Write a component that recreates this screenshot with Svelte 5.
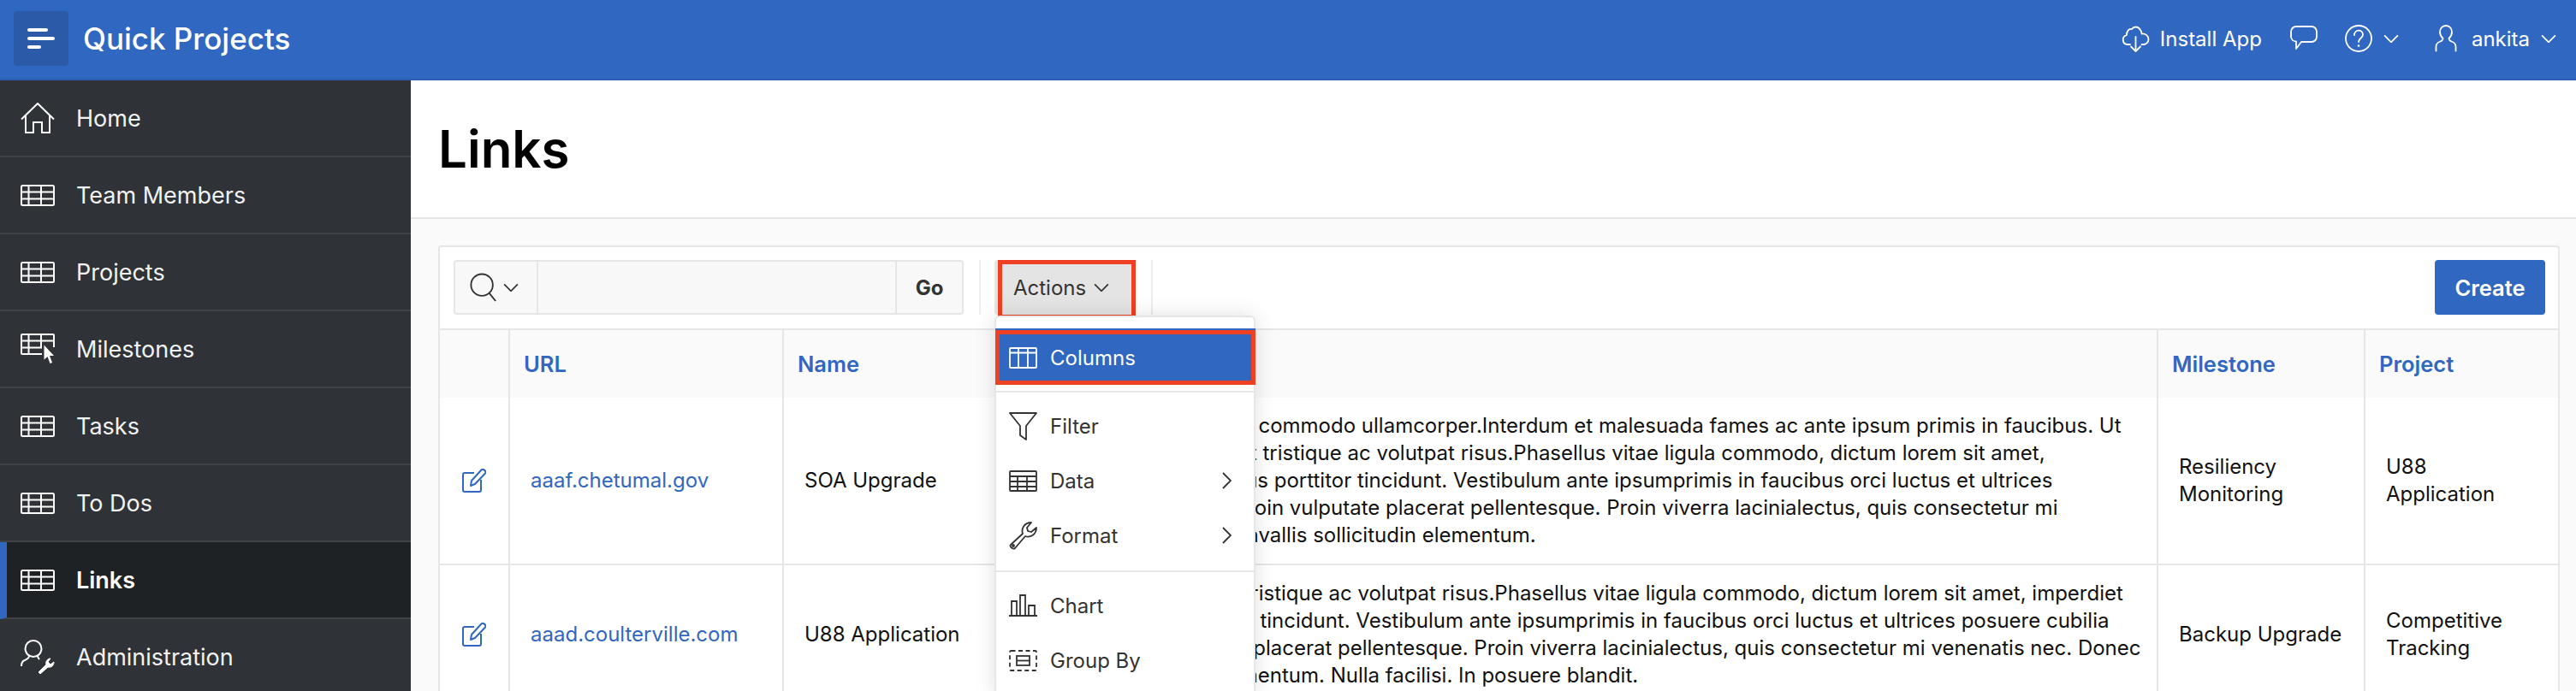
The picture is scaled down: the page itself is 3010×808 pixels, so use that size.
<script>
	const nav = [
		{ label: 'Home', icon: 'home' },
		{ label: 'Team Members', icon: 'table' },
		{ label: 'Projects', icon: 'table' },
		{ label: 'Milestones', icon: 'cursor' },
		{ label: 'Tasks', icon: 'table' },
		{ label: 'To Dos', icon: 'table' },
		{ label: 'Links', icon: 'table', active: true },
		{ label: 'Administration', icon: 'admin' }
	];
	const rows = [
		{
			url: 'aaaf.chetumal.gov',
			name: 'SOA Upgrade',
			lines: [
				'Aliquam ut ante sed nisl commodo ullamcorper.Interdum et malesuada fames ac ante ipsum primis in faucibus. Ut',
				'Nulla, nec lorem amet at tristique ac volutpat risus.Phasellus vitae ligula commodo, dictum lorem sit amet,',
				'Augue sed nisl a vivamus porttitor tincidunt. Vestibulum ante ipsumprimis in faucibus orci luctus et ultrices',
				'Posuere cubilias sed. Proin vulputate placerat pellentesque. Proin viverra lacinialectus, quis consectetur mi',
				'Venenatis sed vel et convallis sollicitudin elementum.'
			],
			milestone: ['Resiliency', 'Monitoring'],
			project: ['U88', 'Application']
		},
		{
			url: 'aaad.coulterville.com',
			name: 'U88 Application',
			lines: [
				'Sed eget nunc nulla at tristique ac volutpat risus.Phasellus vitae ligula commodo, dictum lorem sit amet, imperdiet',
				'Augue vivamus porttitor tincidunt. Vestibulum ante ipsumprimis in faucibus orci luctus et ultrices posuere cubilia',
				'Curae sed, at vulputate placerat pellentesque. Proin viverra lacinialectus, quis consectetur mi venenatis nec. Donec',
				'Sed sollicitudine et elementum. Nulla facilisi. In posuere blandit.'
			],
			milestone: ['Backup Upgrade'],
			project: ['Competitive', 'Tracking']
		}
	];
</script>

{#snippet tableIcon()}
	<svg class="nav-icon" viewBox="0 0 40 25" width="40" height="25" fill="none" stroke="#fff" stroke-width="2">
		<rect x="1" y="1" width="38" height="23" rx="1.5" />
		<path d="M1 8.5h38M1 16.5h38M9.500 1v23M24 1v23" />
	</svg>
{/snippet}

{#snippet chevron(w)}
	<svg width={w} height={w * 0.6} viewBox="0 0 18 11" fill="none" stroke="currentColor" stroke-width="1.800"><path d="M1 1.500l8 8 8-8" /></svg>
{/snippet}

<div class="app">
	<header class="top">
		<button class="burger" aria-label="Menu">
			<svg width="32" height="24" viewBox="0 0 32 24" fill="#fff">
				<rect y="0" width="24" height="4" rx="2" />
				<rect y="10" width="32" height="4" rx="2" />
				<rect y="20" width="16" height="4" rx="2" />
			</svg>
		</button>
		<div class="brand">Quick Projects</div>
		<div class="top-right">
			<svg class="cloud" width="33" height="32" viewBox="0 0 33 32" fill="none" stroke="#fff" stroke-width="1.800" stroke-linecap="round" stroke-linejoin="round">
				<path d="M10 23H7a5.500 5.500 0 0 1-1.200-10.800C6 7 9 4 12 5c2-3 7-4 10 1 1 1.500 1.500 3 1.500 4.500 4-.5 8 2 8 6.500 0 3.500-3 6-6 6h-2" />
				<path d="M16.500 14v17M11 25.500l5.500 5.500 5.500-5.500" />
			</svg>
			<span class="install">Install App</span>
			<svg class="chat" width="32" height="32" viewBox="0 0 32 32" fill="none" stroke="#fff" stroke-width="1.800" stroke-linejoin="round">
				<path d="M7 2h18a6 6 0 0 1 6 6v6a6 6 0 0 1-6 6H13l-6 8v-8.500A6 6 0 0 1 1 14V8a6 6 0 0 1 6-6z" />
			</svg>
			<svg class="help" width="32" height="36" viewBox="0 0 32 36" fill="none" stroke="#fff" stroke-width="1.800">
				<circle cx="16" cy="18" r="15" />
				<path d="M11 14c0-7 10-7 10-.5 0 4-5 4-5 8.500" stroke-linecap="round" />
				<circle cx="16" cy="26.500" r="1.300" fill="#fff" stroke="none" />
			</svg>
			<span class="chev">{@render chevron(18)}</span>
			<svg class="user" width="26" height="32" viewBox="0 0 26 32" fill="none" stroke="#fff" stroke-width="1.800" stroke-linecap="round">
				<path d="M13 1c4.500 0 7 3.500 7 7.500 0 3.500-2 6-3.500 7.500 0 2 1 2.500 3 3.500 3 1 5 3 5 6v5M13 1c-4.500 0-7 3.500-7 7.500 0 3.500 2 6 3.500 7.500 0 2-1 2.500-3 3.500-3 1-5 3-5 6v5" />
			</svg>
			<span class="username">ankita</span>
			<span class="chev">{@render chevron(18)}</span>
		</div>
	</header>

	<div class="main">
		<nav class="side">
			{#each nav as item}
				<a class="item" class:active={item.active} href="#top">
					{#if item.icon === 'home'}
						<svg class="nav-icon" width="40" height="36" viewBox="0 0 40 36" fill="none" stroke="#fff" stroke-width="2">
							<path d="M1 19.500L20 1l19 18.500M6 15v20h9V23h10v12h9V15" />
						</svg>
					{:else if item.icon === 'table'}
						{@render tableIcon()}
					{:else if item.icon === 'cursor'}
						<svg class="nav-icon" width="40" height="36" viewBox="0 0 40 36" fill="none" stroke="#fff" stroke-width="2">
							<path d="M25 24H2a1 1 0 0 1-1-1V2a1 1 0 0 1 1-1h36a1 1 0 0 1 1 1v14M1 8.500h38M1 16.500h24M9.500 1v23M24 1v16" />
							<path d="M27.500 13.500v17l4-3.500 3 8 2.500-1-3-8h5z" fill="#fff" stroke="none" />
						</svg>
					{:else}
						<svg class="nav-icon" width="40" height="40" viewBox="0 0 40 40" fill="none" stroke="#fff" stroke-width="2">
							<circle cx="15" cy="10.500" r="9.500" />
							<path d="M10 19c0 3-3 4-5 5-3 1-4 3-4 7M20 19c0 2 1 3 2 4" />
							<path d="M21 38l9-9c-1-3 1-7 5-7l-3 4 3 3 4-3c0 4-3 7-7 6l-9 8z" fill="#fff" stroke="#fff" stroke-width="1" />
						</svg>
					{/if}
					<span>{item.label}</span>
				</a>
			{/each}
		</nav>

		<main class="content">
			<div class="page-head"><h1>Links</h1></div>
			<section class="region">
				<div class="toolbar">
					<div class="search">
						<div class="search-col">
							<svg width="32" height="34" viewBox="0 0 34 36" fill="none" stroke="#333" stroke-width="2">
								<circle cx="15" cy="15" r="13.500" />
								<path d="M24 25l8 10" />
							</svg>
							<span class="chev">{@render chevron(18)}</span>
						</div>
						<div class="search-input"></div>
						<div class="go">Go</div>
					</div>
					<div class="sep"></div>
					<div class="actions">
						<span>Actions</span>
						<span class="chev">{@render chevron(18)}</span>
						<div class="red-box"></div>
					</div>
					<div class="sep"></div>
					<button class="create">Create</button>

					<div class="menu">
						<div class="menu-item current">
							<svg width="33" height="25" viewBox="0 0 33 25" fill="none" stroke="#fff" stroke-width="1.800">
								<rect x="1" y="1" width="31" height="23" rx="1" />
								<path d="M1 6.500h31M11 1v23M22 1v23" />
							</svg>
							<span>Columns</span>
						</div>
						<div class="menu-list">
							<div class="menu-item">
								<svg width="33" height="33" viewBox="0 0 33 33" fill="none" stroke="#333" stroke-width="1.800" stroke-linejoin="round">
									<path d="M1 1h31L20 16v16l-7-5V16z" />
								</svg>
								<span>Filter</span>
							</div>
							<div class="menu-item">
								<svg width="33" height="25" viewBox="0 0 33 25" fill="none" stroke="#333" stroke-width="1.800">
									<rect x="1" y="1" width="31" height="23" rx="1" />
									<path d="M1 7h31M1 13h31M1 19h31M10 7v17M21 7v17" />
								</svg>
								<span>Data</span>
								<svg class="arrow" width="11" height="20" viewBox="0 0 11 20" fill="none" stroke="#333" stroke-width="1.800"><path d="M1 1l9 9-9 9" /></svg>
							</div>
							<div class="menu-item">
								<svg width="33" height="33" viewBox="0 0 33 33" fill="none" stroke="#333" stroke-width="1.800" stroke-linejoin="round">
									<path d="M2 27L16 14c-2-6 2-13 10-13l-5 6 1 4 4 1 6-5c0 8-7 12-13 10L7 31c-2 2-7-2-5-4z" />
									<circle cx="5" cy="28" r="1" />
								</svg>
								<span>Format</span>
								<svg class="arrow" width="11" height="20" viewBox="0 0 11 20" fill="none" stroke="#333" stroke-width="1.800"><path d="M1 1l9 9-9 9" /></svg>
							</div>
						</div>
						<div class="menu-list second">
							<div class="menu-item">
								<svg width="33" height="26" viewBox="0 0 33 26" fill="none" stroke="#333" stroke-width="1.800">
									<path d="M0 25h33M3 25V8h6v17M13 25V1h6v24M23 25V13h7v12" />
								</svg>
								<span>Chart</span>
							</div>
							<div class="menu-item">
								<svg width="33" height="25" viewBox="0 0 33 25" fill="none" stroke="#333" stroke-width="1.800">
									<rect x="1" y="1" width="31" height="23" rx="1.500" stroke-dasharray="5 3.500" />
									<rect x="9" y="7" width="15" height="11" />
									<path d="M9 12.500h15" />
								</svg>
								<span>Group By</span>
							</div>
						</div>
					</div>
				</div>

				<table>
					<colgroup>
						<col class="c-edit" /><col class="c-url" /><col class="c-name" /><col /><col class="c-mile" /><col class="c-proj" />
					</colgroup>
					<thead>
						<tr>
							<th></th>
							<th>URL</th>
							<th>Name</th>
							<th></th>
							<th>Milestone</th>
							<th>Project</th>
						</tr>
					</thead>
					<tbody>
						{#each rows as row}
							<tr>
								<td class="edit">
									<svg width="28" height="28" viewBox="0 0 28 28" fill="none" stroke="#3067c0" stroke-width="2" stroke-linejoin="round">
										<path d="M14 5H3a2 2 0 0 0-2 2v18a2 2 0 0 0 2 2h17a2 2 0 0 0 2-2V13" />
										<path d="M10 20l1-6L22 2c1-1.500 3-1.500 4.500 0s1 3 0 4L15 18z" />
									</svg>
								</td>
								<td class="url"><a href="#top">{row.url}</a></td>
								<td class="name">{row.name}</td>
								<td class="desc">
									{#each row.lines as line}<div>{line}</div>{/each}
								</td>
								<td>{#each row.milestone as l}<div>{l}</div>{/each}</td>
								<td>{#each row.project as l}<div>{l}</div>{/each}</td>
							</tr>
						{/each}
					</tbody>
				</table>
			</section>
		</main>
	</div>
</div>

<style>
	:global(body) {
		margin: 0;
	}
	.app {
		width: 3010px;
		height: 808px;
		overflow: hidden;
		display: flex;
		flex-direction: column;
		font-family: Inter, "Liberation Sans", sans-serif;
		font-size: 24px;
		color: #111;
	}
	.top {
		flex: 0 0 94px;
		box-sizing: border-box;
		display: flex;
		align-items: center;
		background: #3067c0;
		border-bottom: 2px solid #2c5fb2;
		color: #fff;
		padding: 0 23px 2px 16px;
	}
	.burger {
		width: 64px;
		height: 64px;
		padding: 0;
		border: 0;
		border-radius: 4px;
		background: #2a5aa8;
		display: flex;
		align-items: center;
		justify-content: center;
	}
	.brand {
		margin-left: 17px;
		font-size: 35px;
		font-weight: 500;
	}
	.top-right {
		margin-left: auto;
		display: flex;
		align-items: center;
		font-size: 24px;
	}
	.install {
		margin-left: 12px;
	}
	.chat {
		margin-left: 33px;
	}
	.help {
		margin-left: 32px;
	}
	.chev {
		display: inline-flex;
		margin-left: 13px;
	}
	.user {
		margin-left: 42px;
	}
	.username {
		margin-left: 17px;
	}
	.main {
		flex: 1;
		display: flex;
		min-height: 0;
	}
	.side {
		flex: 0 0 480px;
		background: #2f3337;
	}
	.item {
		box-sizing: border-box;
		height: 90px;
		display: flex;
		align-items: center;
		padding-left: 24px;
		border-bottom: 2px solid #404448;
		color: #f2f2f2;
		text-decoration: none;
		font-size: 27px;
	}
	.item span {
		margin-left: 25px;
	}
	.nav-icon {
		flex: none;
	}
	.item.active {
		background: #1e2225;
		border-left: 8px solid #3067c0;
		padding-left: 16px;
		font-weight: 600;
		color: #fff;
	}
	.content {
		flex: 1;
		background: #fafafa;
		min-width: 0;
	}
	.page-head {
		box-sizing: border-box;
		height: 162px;
		background: #fff;
		border-bottom: 2px solid #e6e6e6;
		padding-left: 32px;
		display: flex;
		align-items: center;
	}
	h1 {
		margin: 0;
		font-size: 60px;
		font-weight: 600;
		color: #000;
	}
	.region {
		margin: 31px 19px 0 32px;
		background: #fff;
		border: 2px solid #e6e6e6;
		border-radius: 4px;
	}
	.toolbar {
		position: relative;
		box-sizing: border-box;
		height: 97px;
		padding: 15px 15px 0 16px;
		display: flex;
		align-items: flex-start;
		border-bottom: 2px solid #e6e6e6;
	}
	.search {
		box-sizing: border-box;
		width: 596px;
		height: 64px;
		display: flex;
		background: #f8f8f8;
		border: 2px solid #e6e6e6;
		border-radius: 4px;
		color: #333;
	}
	.search-col {
		flex: 0 0 97px;
		box-sizing: border-box;
		display: flex;
		align-items: center;
		padding-left: 17px;
		border-right: 2px solid #e6e6e6;
	}
	.search-col .chev {
		margin-left: 7px;
	}
	.search-input {
		flex: 1;
	}
	.go {
		flex: 0 0 78px;
		box-sizing: border-box;
		display: flex;
		align-items: center;
		justify-content: center;
		font-weight: 700;
		border-left: 2px solid #e6e6e6;
	}
	.sep {
		width: 2px;
		height: 64px;
		margin-left: 18px;
		background: #eee;
	}
	.actions {
		position: relative;
		box-sizing: border-box;
		width: 165px;
		height: 64px;
		margin-left: 16px;
		padding-left: 22px;
		display: flex;
		align-items: center;
		background: #e4e4e4;
		border-radius: 4px 0 0 4px;
		color: #333;
	}
	.actions .chev {
		margin-left: 9px;
	}
	.red-box {
		position: absolute;
		left: 4px;
		top: 0;
		width: 161px;
		height: 69px;
		box-sizing: border-box;
		border: 5px solid #ee4023;
	}
	.create {
		margin-left: auto;
		width: 129px;
		height: 64px;
		border: 0;
		border-radius: 4px;
		background: #3067c0;
		color: #fff;
		font: 600 25.5px Inter, "Liberation Sans", sans-serif;
	}
	.menu {
		position: absolute;
		z-index: 2;
		left: 648px;
		top: 80px;
		width: 305px;
		box-sizing: border-box;
		background: #fff;
		border: 2px solid #e6e6e6;
		border-bottom: 0;
		border-radius: 6px 6px 0 0;
		box-shadow: 0 0 24px rgba(0, 0, 0, 0.12);
		padding-top: 13px;
		color: #333;
	}
	.menu-item {
		height: 64px;
		display: flex;
		align-items: center;
		position: relative;
		padding-left: 15px;
	}
	.menu-item svg {
		flex: none;
	}
	.menu-item span {
		position: absolute;
		left: 63px;
	}
	.arrow {
		position: absolute;
		right: 26px;
	}
	.menu-item.current {
		box-sizing: border-box;
		height: 64px;
		margin: 2px -2px 0 -1px;
		background: #3067c0;
		color: #fff;
		border: 5px solid #ee4023;
		box-shadow: 0 -2px 0 #3067c0;
		padding-left: 11px;
	}
	.menu-item.current span {
		left: 59px;
	}
	.menu-list {
		padding: 7px 0 9px;
		border-top: 2px solid #e6e6e6;
		margin-top: 7px;
	}
	.second {
		margin-top: 0;
	}
	table {
		width: 100%;
		table-layout: fixed;
		border-collapse: collapse;
	}
	.c-edit {
		width: 81px;
	}
	.c-url {
		width: 320px;
	}
	.c-name {
		width: 254px;
	}
	.c-mile {
		width: 242px;
	}
	.c-proj {
		width: 226px;
	}
	th {
		height: 79px;
		padding: 0 0 0 16px;
		background: #fafafa;
		border-left: 2px solid #e6e6e6;
		color: #3067c0;
		font-size: 25.5px;
		font-weight: 600;
		text-align: left;
	}
	th:first-child,
	td:first-child {
		border-left: 0;
	}
	td {
		padding: 17px 24px;
		line-height: 32px;
		border-left: 2px solid #e6e6e6;
		border-bottom: 2px solid #e6e6e6;
		color: #111;
	}
	.edit {
		padding: 0;
		text-align: center;
	}
	.edit svg {
		display: block;
		margin: 0 auto;
	}
	.url a {
		color: #3067c0;
		text-decoration: none;
	}
	.desc div {
		white-space: nowrap;
	}
</style>
